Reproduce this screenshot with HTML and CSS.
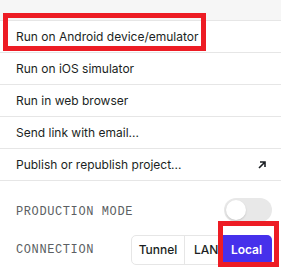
FILE: index.html
```html
<!DOCTYPE html>
<html>
<head>
<meta charset="utf-8">
<link rel="stylesheet" href="styles.css">
</head>
<body>
<div class="panel">
  <div class="topbar"></div>
  <ul class="menu">
    <li class="item">Run on Android device/emulator</li>
    <li class="item">Run on iOS simulator</li>
    <li class="item">Run in web browser</li>
    <li class="item">Send link with email...</li>
    <li class="item item-link">
      <span>Publish or republish project...</span>
      <svg class="arrow" width="8" height="8" viewBox="0 0 8 8"><path d="M1 7 L7 1 M2 1 H7 V6" fill="none" stroke="#1b1f23" stroke-width="1.6"/></svg>
    </li>
  </ul>
  <div class="settings">
    <div class="setting">
      <span class="label">PRODUCTION MODE</span>
      <span class="toggle"><span class="knob"></span></span>
    </div>
    <div class="setting">
      <span class="label">CONNECTION</span>
      <div class="segmented">
        <span class="seg seg-tunnel">Tunnel</span>
        <span class="seg seg-lan">LAN</span>
        <span class="seg seg-active">Local</span>
      </div>
    </div>
  </div>
  <div class="mark mark-top"></div>
  <div class="mark mark-bottom"></div>
</div>
</body>
</html>
```
FILE: styles.css
```css
* { box-sizing: border-box; }
html, body { margin: 0; padding: 0; background: #fff; }
body { font-family: Inter, "Noto Sans", sans-serif; color: #1b1f23; }
.panel { position: relative; width: 281px; height: 272px; overflow: hidden; }
.topbar { height: 21px; background: #f6f6f6; border-bottom: 1px solid #e6e6e6; }
.menu { list-style: none; margin: 0; padding: 0; }
.item {
  height: 32px; padding: 0 16px; border-bottom: 1px solid #e6e6e6;
  display: flex; align-items: center; font-size: 12px;
}
.item-link { justify-content: space-between; padding-right: 15px; }
.arrow { display: block; }
.settings { padding: 0 9px 0 16px; }
.setting { display: flex; align-items: center; justify-content: space-between; }
.setting:first-child { height: 46px; padding-top: 15px; }
.setting:last-child { height: 38px; padding-top: 7px; }
.label { font-family: "Liberation Mono", monospace; font-size: 12px; letter-spacing: 0.6px; color: #5c5f63; }
.toggle { width: 48px; height: 24px; border-radius: 12px; background: #e8e8e8; position: relative; display: block; margin-top: -3px; }
.knob { position: absolute; left: 2px; top: 2px; width: 20px; height: 20px; border-radius: 50%; background: #fff; box-shadow: 0 1px 2px rgba(0,0,0,0.15); }
.segmented { display: flex; height: 30px; border: 1px solid #e6e6e6; border-radius: 5px; }
.seg { display: flex; align-items: center; justify-content: center; font-size: 12px; font-weight: 500; border-right: 1px solid #e6e6e6; }
.seg-tunnel { width: 53px; }
.seg-lan { width: 36px; justify-content: flex-start; padding-left: 9px; }
.seg:last-child { border-right: 0; }
.seg-active { width: 51px; background: #4630eb; color: #fff; font-weight: 600; border-radius: 0 5px 5px 0; margin: -1px -1px -1px 0; }
.mark { position: absolute; border: 5px solid #ed1c24; }
.mark-top { left: 3px; top: 13px; width: 203px; height: 38px; }
.mark-bottom { left: 218px; top: 221px; width: 61px; height: 46px; }
```
